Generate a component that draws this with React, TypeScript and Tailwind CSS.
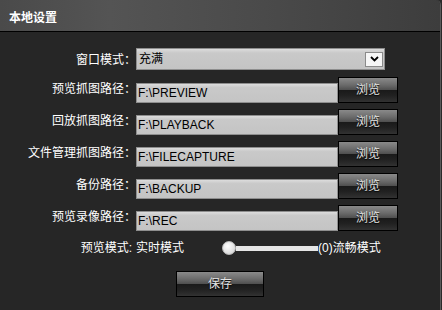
import React from "react";

const FONT = { fontFamily: '"Liberation Sans", "Noto Sans CJK SC", sans-serif' };

function Label({ text }: { text: string }) {
  return (
    <div className="w-[136px] shrink-0 text-right text-[12px] leading-[14px] text-white mt-[5px]">
      {text}
    </div>
  );
}

function DarkButton({ text, className = "" }: { text: string; className?: string }) {
  return (
    <div
      className={
        "h-[26px] border border-black flex items-center justify-center text-[12px] leading-[14px] text-[#e4e4e4] [text-shadow:0_1px_1px_#000] bg-[linear-gradient(to_bottom,#8a8a8a_0%,#6a6a6a_30%,#4e4e4e_50%,#1a1a1a_52%,#222_75%,#323232_100%)] " +
        className
      }
    >
      {text}
    </div>
  );
}

function PathRow({ label, value }: { label: string; value: string }) {
  return (
    <div className="flex h-[26px]">
      <Label text={label} />
      <div className="mt-[6px] h-[20px] w-[202px] border border-[#8e8e8e] bg-[linear-gradient(to_bottom,#dcdcdc,#c9c9c9_20%,#c4c4c4)] pl-[1px] text-[12px] leading-[18px] text-black">
        {value}
      </div>
      <DarkButton text="浏览" className="w-[60px]" />
    </div>
  );
}

export default function App() {
  return (
    <div className="w-[442px] h-[310px] bg-[#2a2a2a]" style={FONT}>
      <div className="w-[441px] h-[310px] bg-[#262626] rounded-tr-[5px] overflow-hidden border-r border-[#5a5a5a] flex flex-col">
        <div className="h-[32px] shrink-0 border-b border-black bg-[linear-gradient(to_right,#4a4a4a,#545454_25%,#4a4a4a_60%,#3d3d3d)] pl-[9px] pt-[11px]">
          <div className="text-[12px] leading-[14px] font-bold text-white">本地设置</div>
        </div>

        <div className="flex flex-col pt-[16px]">
          <div className="flex h-[22px]">
            <Label text="窗口模式：" />
            <div className="h-[22px] w-[249px] border border-[#8e8e8e] bg-[linear-gradient(to_bottom,#dcdcdc,#c9c9c9_20%,#c4c4c4)] flex items-center pl-[2px] pr-[1px]">
              <span className="flex-1 text-[12px] leading-[14px] text-black">充满</span>
              <div className="w-[18px] h-[15px] bg-[#f6f6f6] border border-[#8a8a8a] flex items-center justify-center">
                <svg width="9" height="6" viewBox="0 0 9 6">
                  <path d="M1 1 L4.5 4.5 L8 1" fill="none" stroke="#000" strokeWidth="1.8" />
                </svg>
              </div>
            </div>
          </div>

          <div className="flex flex-col gap-[6px] mt-[7px]">
            <PathRow label="预览抓图路径：" value="F:\PREVIEW" />
            <PathRow label="回放抓图路径：" value="F:\PLAYBACK" />
            <PathRow label="文件管理抓图路径：" value="F:\FILECAPTURE" />
            <PathRow label="备份路径：" value="F:\BACKUP" />
            <PathRow label="预览录像路径：" value="F:\REC" />
          </div>

          <div className="flex items-center h-[14px] mt-[10px] text-[12px] leading-[14px] text-white">
            <div className="w-[136px] shrink-0 text-right pr-[4px]">预览模式:</div>
            <div className="w-[48px] shrink-0">实时模式</div>
            <div className="ml-[38px] flex items-center">
              <div className="w-[14px] h-[14px] rounded-full bg-[radial-gradient(circle_at_40%_35%,#ffffff,#e2e2e2_60%,#c8c8c8)] border border-[#bdbdbd]" />
              <div className="w-[82px] h-[5px] bg-[#e6e6e6]" />
            </div>
            <div className="whitespace-nowrap">(0)流畅模式</div>
          </div>

          <div className="flex justify-center mt-[16px]">
            <DarkButton text="保存" className="w-[88px]" />
          </div>
        </div>
      </div>
    </div>
  );
}
